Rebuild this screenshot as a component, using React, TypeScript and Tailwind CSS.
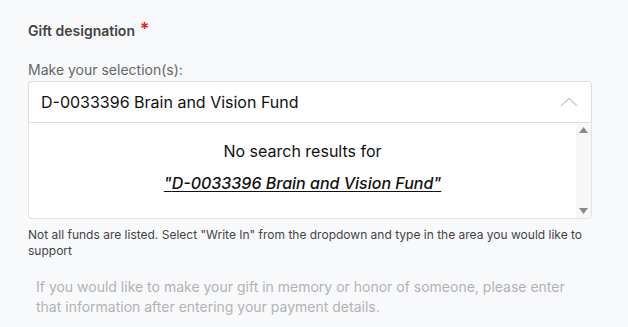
export default function App() {
  const fund = "D-0033396 Brain and Vision Fund";
  return (
    <div className="min-h-[327px] w-[628px] bg-[#f8f9fb] pl-7 pr-9 pt-[21px] font-['Inter',sans-serif]">
      <div className="flex items-start text-[14px] font-semibold text-[#444]">
        <span className="leading-5">Gift designation</span>
        <span className="ml-[5px] text-[17px] leading-4 text-[#e02020]">*</span>
      </div>

      <div className="mt-[19px] text-[14px] leading-5 text-[#666]">
        Make your selection(s):
      </div>

      <div className="mt-[1px] flex h-[42px] items-center justify-between rounded-t-[4px] border border-[#dcdcdc] bg-white pl-3 pr-3">
        <span className="text-[16px] text-[#111]">{fund}</span>
        <svg width="18" height="10" viewBox="0 0 18 10" fill="none" className="mr-[1px]">
          <path d="M1 9L9 1.5L17 9" stroke="#cfcfcf" strokeWidth="1.6" />
        </svg>
      </div>

      <div className="flex h-[96px] rounded-b-[4px] border border-t-0 border-[#e3e3e3] bg-white">
        <div className="flex flex-1 flex-col items-center pt-[18px]">
          <div className="text-[16px] leading-5 text-[#111]">No search results for</div>
          <div className="mt-[12px] text-[16px] font-medium italic leading-5 text-[#111] underline underline-offset-2">
            "{fund}"
          </div>
        </div>
        <div className="flex w-[15px] flex-col items-center justify-between bg-[#f7f7f7] py-[4px]">
          <svg width="9" height="6" viewBox="0 0 9 6">
            <path d="M4.5 0L9 6H0Z" fill="#8a8a8a" />
          </svg>
          <svg width="9" height="6" viewBox="0 0 9 6">
            <path d="M0 0H9L4.5 6Z" fill="#8a8a8a" />
          </svg>
        </div>
      </div>

      <p className="mt-[8px] text-[12px] leading-4 text-[#444]">
        Not all funds are listed. Select "Write In" from the dropdown and type in the area you would like to support
      </p>

      <p className="mt-[18px] pl-2 text-[14px] leading-5 text-[#b3b3b3]">
        If you would like to make your gift in memory or honor of someone, please enter that information after entering your payment details.
      </p>
    </div>
  );
}
